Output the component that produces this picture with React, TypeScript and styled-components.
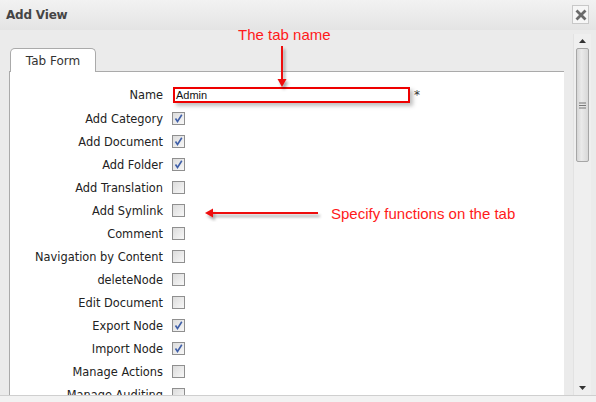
import React from "react";
import styled, { createGlobalStyle } from "styled-components";

const Global = createGlobalStyle`
  html, body { margin: 0; padding: 0; background: #f2f2f2; }
  #root { width: 596px; height: 402px; overflow: hidden; }
`;

const Dialog = styled.div`
  position: relative;
  width: 596px;
  height: 402px;
  display: flex;
  flex-direction: column;
  background: #ebebeb;
  font-family: "DejaVu Sans", Verdana, sans-serif;
  overflow: hidden;
`;

const TitleBar = styled.div`
  height: 30px;
  flex: none;
  display: flex;
  align-items: center;
  justify-content: space-between;
  padding: 0 7px 0 6px;
  background: linear-gradient(#f2f2f2, #e4e4e4);
`;

const Title = styled.div`
  font-family: "DejaVu Sans", Verdana, sans-serif;
  font-weight: bold;
  font-size: 12px;
  color: #454545;
  letter-spacing: -0.2px;
`;

const CloseButton = styled.div`
  width: 15px;
  height: 17px;
  border: 1px solid #c8c8c8;
  background: #f6f6f6;
  display: flex;
  align-items: center;
  justify-content: center;
  margin-top: -1px;
`;

const ScrollArea = styled.div`
  height: 365px;
  flex: none;
  display: flex;
  overflow: hidden;
`;

const Content = styled.div`
  flex: 1;
  padding: 18px 0 0 9px;
  display: flex;
  flex-direction: column;
  overflow: hidden;
`;

const TabStrip = styled.div`
  display: flex;
  height: 24px;
  padding-left: 1px;
`;

const Tab = styled.div`
  width: 86px;
  height: 24px;
  box-sizing: border-box;
  border: 1px solid #aaaaaa;
  border-bottom: none;
  border-radius: 5px 5px 0 0;
  background: #ffffff;
  display: flex;
  align-items: center;
  justify-content: center;
  font-size: 12px;
  padding-top: 1px;
  color: #333;
  margin-bottom: -1px;
  position: relative;
  z-index: 1;
`;

const Panel = styled.div`
  width: 557px;
  flex: 1;
  box-sizing: border-box;
  border: 1px solid #aaaaaa;
  border-bottom: none;
  background: #ffffff;
  padding-top: 11px;
`;

const FormGrid = styled.div`
  display: grid;
  grid-template-columns: 153px auto;
  grid-template-rows: 24px;
  column-gap: 9px;
  grid-auto-rows: 23px;
  align-items: center;
`;

const Label = styled.div`
  text-align: right;
  font-size: 11.4px;
  color: #222;
  white-space: nowrap;
`;

const NameRow = styled.div`
  display: flex;
  align-items: center;
  gap: 4px;
`;

const NameInput = styled.div`
  width: 237px;
  height: 16px;
  box-sizing: border-box;
  border: 2px solid #ee0000;
  box-shadow: 3px 3px 4px rgba(0, 0, 0, 0.25);
  font-family: "Liberation Sans", Arial, sans-serif;
  font-size: 11px;
  color: #111;
  padding-left: 1px;
  line-height: 13px;
  margin-left: 1px;
`;

const Required = styled.span`
  font-size: 12px;
  color: #333;
`;

const Box = styled.div<{ $checked?: boolean }>`
  width: 13px;
  height: 13px;
  box-sizing: border-box;
  border: 1px solid #8f8f8f;
  background: linear-gradient(135deg, #dcdcdc, #f7f7f7);
  display: flex;
  align-items: center;
  justify-content: center;
`;

const ScrollBar = styled.div`
  width: 17px;
  flex: none;
  margin: 4px 5px 0 9px;
  background: #efefef;
  border-left: 1px solid #e2e2e2;
  display: flex;
  flex-direction: column;
  align-items: center;
`;

const Arrow = styled.div`
  height: 14px;
  display: flex;
  align-items: center;
  justify-content: center;
`;

const Thumb = styled.div`
  width: 13px;
  height: 114px;
  box-sizing: border-box;
  border: 1px solid #a6a6a6;
  border-radius: 2px;
  background: linear-gradient(90deg, #d6d6d6, #eaeaea 40%, #d8d8d8);
  display: flex;
  align-items: center;
  justify-content: center;
`;

const Spacer = styled.div`
  flex: 1;
`;

const Footer = styled.div`
  flex: 1;
  border-top: 1px solid #cfcfcf;
  background: #f2f2f2;
`;

const Note = styled.div<{ $x: number; $y: number }>`
  position: absolute;
  left: ${(p) => p.$x}px;
  top: ${(p) => p.$y}px;
  font-family: "Liberation Sans", Arial, sans-serif;
  font-size: 15px;
  color: #ff1a1a;
  white-space: nowrap;
  z-index: 3;
`;

const Overlay = styled.svg`
  position: absolute;
  left: 0;
  top: 0;
  pointer-events: none;
  z-index: 3;
`;

const Check = () => (
  <svg width="9" height="9" viewBox="0 0 9 9">
    <path d="M1.5 4.5 L3.5 7.5 L7.8 0.8" fill="none" stroke="#3f5fa8" strokeWidth="1.6" />
  </svg>
);

const rows: [string, boolean][] = [
  ["Add Category", true],
  ["Add Document", true],
  ["Add Folder", true],
  ["Add Translation", false],
  ["Add Symlink", false],
  ["Comment", false],
  ["Navigation by Content", false],
  ["deleteNode", false],
  ["Edit Document", false],
  ["Export Node", true],
  ["Import Node", true],
  ["Manage Actions", false],
  ["Manage Auditing", false],
];

export default function App() {
  return (
    <>
      <Global />
      <Dialog>
        <TitleBar>
          <Title>Add View</Title>
          <CloseButton>
            <svg width="12" height="12" viewBox="0 0 12 12">
              <path d="M1.5 1.5 L10.5 10.5 M10.5 1.5 L1.5 10.5" stroke="#6a6a6a" strokeWidth="2.8" />
            </svg>
          </CloseButton>
        </TitleBar>
        <ScrollArea>
          <Content>
            <TabStrip>
              <Tab>Tab Form</Tab>
            </TabStrip>
            <Panel>
              <FormGrid>
                <Label>Name</Label>
                <NameRow>
                  <NameInput>Admin</NameInput>
                  <Required>*</Required>
                </NameRow>
                {rows.map(([name, checked]) => (
                  <React.Fragment key={name}>
                    <Label>{name}</Label>
                    <div>
                      <Box $checked={checked}>{checked && <Check />}</Box>
                    </div>
                  </React.Fragment>
                ))}
              </FormGrid>
            </Panel>
          </Content>
          <ScrollBar>
            <Arrow>
              <svg width="7" height="4" viewBox="0 0 7 4">
                <path d="M0 4 L3.5 0 L7 4 Z" fill="#333" />
              </svg>
            </Arrow>
            <Thumb>
              <svg width="7" height="7" viewBox="0 0 7 7">
                <path d="M0 1 H7 M0 3.5 H7 M0 6 H7" stroke="#777" strokeWidth="1" />
              </svg>
            </Thumb>
            <Spacer />
            <Arrow>
              <svg width="7" height="4" viewBox="0 0 7 4">
                <path d="M0 0 L7 0 L3.5 4 Z" fill="#333" />
              </svg>
            </Arrow>
          </ScrollBar>
        </ScrollArea>
        <Footer />
        <Note $x={238} $y={26}>The tab name</Note>
        <Note $x={331} $y={205}>Specify functions on the tab</Note>
        <Overlay width="596" height="402">
          <defs>
            <filter id="sh" x="-50%" y="-50%" width="200%" height="200%">
              <feDropShadow dx="2" dy="3" stdDeviation="1.6" floodColor="#000" floodOpacity="0.35" />
            </filter>
          </defs>
          <g filter="url(#sh)">
            <path d="M282 46 V80" stroke="#ee1111" strokeWidth="2" />
            <path d="M277.5 79 L286.5 79 L282 87 Z" fill="#ee1111" />
          </g>
          <g filter="url(#sh)">
            <path d="M318 213 H212" stroke="#ee1111" strokeWidth="2" />
            <path d="M213 208.5 L213 217.5 L205 213 Z" fill="#ee1111" />
          </g>
        </Overlay>
      </Dialog>
    </>
  );
}
